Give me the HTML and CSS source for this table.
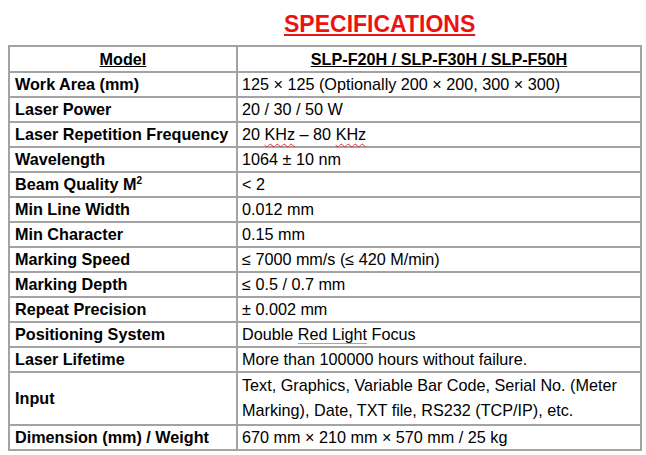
FILE: index.html
```html
<!DOCTYPE html>
<html>
<head>
<meta charset="utf-8">
<link rel="stylesheet" href="styles.css">
</head>
<body>
<div class="page">
  <h1 class="title">SPECIFICATIONS</h1>
  <table class="spec">
    <colgroup><col class="c1"><col class="c2"></colgroup>
    <tr class="head"><th>Model</th><th>SLP-F20H / SLP-F30H / SLP-F50H</th></tr>
    <tr><td class="k">Work Area (mm)</td><td>125 × 125 (Optionally 200 × 200, 300 × 300)</td></tr>
    <tr><td class="k">Laser Power</td><td>20 / 30 / 50 W</td></tr>
    <tr><td class="k">Laser Repetition Frequency</td><td>20 <span class="sp">KHz</span> – 80 <span class="sp">KHz</span></td></tr>
    <tr><td class="k">Wavelength</td><td>1064 ± 10 nm</td></tr>
    <tr><td class="k">Beam Quality M<sup>2</sup></td><td>&lt; 2</td></tr>
    <tr><td class="k">Min Line Width</td><td>0.012 mm</td></tr>
    <tr><td class="k">Min Character</td><td>0.15 mm</td></tr>
    <tr><td class="k">Marking Speed</td><td>≤ 7000 mm/s (≤ 420 M/min)</td></tr>
    <tr><td class="k">Marking Depth</td><td>≤ 0.5 / 0.7 mm</td></tr>
    <tr><td class="k">Repeat Precision</td><td>± 0.002 mm</td></tr>
    <tr><td class="k">Positioning System</td><td>Double <span class="gr">Red Light</span> Focus</td></tr>
    <tr><td class="k">Laser Lifetime</td><td>More than 100000 hours without failure.</td></tr>
    <tr class="tall"><td class="k">Input</td><td>Text, Graphics, Variable Bar Code, Serial No. (Meter Marking), Date, TXT file, RS232 (TCP/IP), etc.</td></tr>
    <tr><td class="k">Dimension (mm) / Weight</td><td>670 mm × 210 mm × 570 mm / 25 kg</td></tr>
  </table>
</div>
</body>
</html>
```
FILE: styles.css
```css
html, body {
  margin: 0;
  padding: 0;
  background: #ffffff;
}
.page {
  width: 646px;
  height: 455px;
  padding: 11px 0 0 8px;
  box-sizing: border-box;
  font-family: "Liberation Sans", Arial, sans-serif;
  color: #000;
}
.title {
  margin: 0 0 0 276px;
  font-size: 23px;
  line-height: 26px;
  font-weight: bold;
  color: #ee1111;
  text-decoration: underline;
  text-decoration-thickness: 2px;
  text-underline-offset: 2px;
  height: 34px;
}
.spec {
  border-collapse: collapse;
  width: 634px;
  table-layout: fixed;
  font-size: 16.2px;
}
.c1 { width: 228px; }
.spec th, .spec td {
  border: 2px solid #a3a3a3;
  padding: 0 0 1px 4px;
  height: 22px;
  line-height: 22px;
  text-align: left;
  vertical-align: middle;
  white-space: nowrap;
}
.spec .head th {
  height: 23px;
  text-align: center;
  font-weight: bold;
  text-decoration: underline;
  padding: 0 0 1px 0;
}
.spec td.k {
  font-weight: bold;
  padding-left: 5px;
}
.spec .tall td {
  white-space: normal;
  line-height: 25px;
  height: 49px;
}
sup {
  font-size: 10px;
  line-height: 0;
  vertical-align: 6px;
}
.sp {
  text-decoration: underline wavy #e03030;
  text-decoration-thickness: 1px;
  text-underline-offset: 3px;
}
.gr {
  text-decoration: underline #8aa8e0;
  text-decoration-thickness: 1px;
  text-underline-offset: 3px;
}
```
